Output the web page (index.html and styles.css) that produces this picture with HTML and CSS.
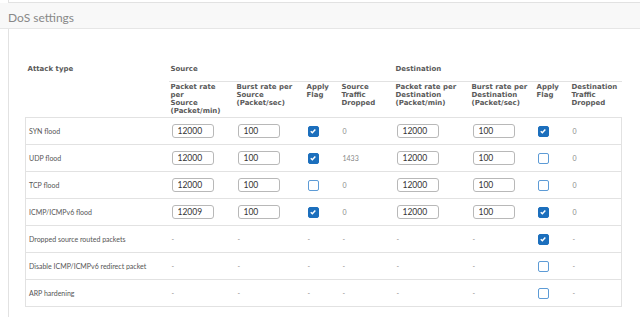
FILE: index.html
```html
<!DOCTYPE html>
<html lang="en">
<head>
    <meta charset="UTF-8">
    <meta name="viewport" content="width=device-width, initial-scale=1.0">
    <title>DoS settings</title>
    <link rel="stylesheet" href="styles.css">
</head>
<body>
    <div class="top-edge"></div>
    <h2 class="section-title">DoS settings</h2>
    <div class="panel">
        <table class="dos-table">
            <colgroup>
                <col style="width:143px">
                <col style="width:66px">
                <col style="width:70px">
                <col style="width:35px">
                <col style="width:54px">
                <col style="width:76px">
                <col style="width:65px">
                <col style="width:35px">
                <col style="width:52px">
            </colgroup>
            <thead>
                <tr class="group-row">
                    <th>Attack type</th>
                    <th colspan="4" class="group">Source</th>
                    <th colspan="4" class="group">Destination</th>
                </tr>
                <tr class="sub-row">
                    <th></th>
                    <th>Packet rate<br>per<br>Source<br>(Packet/min)</th>
                    <th>Burst rate per<br>Source<br>(Packet/sec)</th>
                    <th>Apply<br>Flag</th>
                    <th>Source<br>Traffic<br>Dropped</th>
                    <th>Packet rate per<br>Destination<br>(Packet/min)</th>
                    <th>Burst rate per<br>Destination<br>(Packet/sec)</th>
                    <th>Apply<br>Flag</th>
                    <th>Destination<br>Traffic<br>Dropped</th>
                </tr>
            </thead>
            <tbody>
                <tr>
                    <td class="name">SYN flood</td>
                    <td><input class="field" value="12000"></td>
                    <td><input class="field" value="100"></td>
                    <td><span class="cb checked"><svg viewBox="0 0 10 10"><polyline points="2.2,5.2 4.2,7.2 7.9,3"/></svg></span></td>
                    <td class="val">0</td>
                    <td><input class="field" value="12000"></td>
                    <td><input class="field" value="100"></td>
                    <td><span class="cb checked"><svg viewBox="0 0 10 10"><polyline points="2.2,5.2 4.2,7.2 7.9,3"/></svg></span></td>
                    <td class="val">0</td>
                </tr>
                <tr>
                    <td class="name">UDP flood</td>
                    <td><input class="field" value="12000"></td>
                    <td><input class="field" value="100"></td>
                    <td><span class="cb checked"><svg viewBox="0 0 10 10"><polyline points="2.2,5.2 4.2,7.2 7.9,3"/></svg></span></td>
                    <td class="val">1433</td>
                    <td><input class="field" value="12000"></td>
                    <td><input class="field" value="100"></td>
                    <td><span class="cb"></span></td>
                    <td class="val">0</td>
                </tr>
                <tr>
                    <td class="name">TCP flood</td>
                    <td><input class="field" value="12000"></td>
                    <td><input class="field" value="100"></td>
                    <td><span class="cb"></span></td>
                    <td class="val">0</td>
                    <td><input class="field" value="12000"></td>
                    <td><input class="field" value="100"></td>
                    <td><span class="cb"></span></td>
                    <td class="val">0</td>
                </tr>
                <tr>
                    <td class="name">ICMP/ICMPv6 flood</td>
                    <td><input class="field" value="12009"></td>
                    <td><input class="field" value="100"></td>
                    <td><span class="cb checked"><svg viewBox="0 0 10 10"><polyline points="2.2,5.2 4.2,7.2 7.9,3"/></svg></span></td>
                    <td class="val">0</td>
                    <td><input class="field" value="12000"></td>
                    <td><input class="field" value="100"></td>
                    <td><span class="cb checked"><svg viewBox="0 0 10 10"><polyline points="2.2,5.2 4.2,7.2 7.9,3"/></svg></span></td>
                    <td class="val">0</td>
                </tr>
                <tr>
                    <td class="name">Dropped source routed packets</td>
                    <td class="val">-</td>
                    <td class="val">-</td>
                    <td class="val">-</td>
                    <td class="val">-</td>
                    <td class="val">-</td>
                    <td class="val">-</td>
                    <td><span class="cb checked"><svg viewBox="0 0 10 10"><polyline points="2.2,5.2 4.2,7.2 7.9,3"/></svg></span></td>
                    <td class="val">-</td>
                </tr>
                <tr>
                    <td class="name">Disable ICMP/ICMPv6 redirect packet</td>
                    <td class="val">-</td>
                    <td class="val">-</td>
                    <td class="val">-</td>
                    <td class="val">-</td>
                    <td class="val">-</td>
                    <td class="val">-</td>
                    <td><span class="cb"></span></td>
                    <td class="val">-</td>
                </tr>
                <tr>
                    <td class="name">ARP hardening</td>
                    <td class="val">-</td>
                    <td class="val">-</td>
                    <td class="val">-</td>
                    <td class="val">-</td>
                    <td class="val">-</td>
                    <td class="val">-</td>
                    <td><span class="cb"></span></td>
                    <td class="val">-</td>
                </tr>
            </tbody>
        </table>
    </div>
</body>
</html>
```

FILE: styles.css
```css
* {
    margin: 0;
    padding: 0;
    box-sizing: border-box;
}
body {
    font-family: 'Lato', 'Open Sans', sans-serif;
    background: #fff;
    color: #555;
    overflow: hidden;
}
.top-edge {
    margin-left: 8px;
    height: 3px;
    border-left: 1px solid #e2e2e2;
    border-bottom: 1px solid #e2e2e2;
}
.section-title {
    height: 26px;
    line-height: 25px;
    padding: 2px 0 0 8px;
    background: #f8f8f8;
    border-bottom: 1px solid #e6e6e6;
    font-size: 12px;
    font-weight: normal;
    color: #888;
}
.panel {
    margin-left: 8px;
    border-left: 1px solid #e2e2e2;
    padding: 34px 0 20px 16px;
}
.dos-table {
    width: 596px;
    table-layout: fixed;
    border-collapse: collapse;
}
.dos-table th {
    text-align: left;
    font-family: 'DejaVu Sans', sans-serif;
    font-size: 7px;
    font-weight: bold;
    color: #5a5a5a;
    vertical-align: top;
    padding-left: 2px;
    white-space: nowrap;
}
.group-row th {
    line-height: 12px;
    padding-bottom: 6px;
}
.group-row th.group {
    border-bottom: 1px solid #e2e2e2;
}
.sub-row th {
    line-height: 8px;
    padding-top: 1px;
    padding-bottom: 2px;
}
.dos-table tbody {
    border: 1px solid #e2e2e2;
}
.dos-table tbody tr {
    border-top: 1px solid #e2e2e2;
}
.dos-table td {
    height: 27px;
    padding-left: 3px;
    vertical-align: middle;
}
.name {
    font-size: 7px;
    color: #555;
}
.val {
    font-size: 7px;
    color: #888;
}
.field {
    display: block;
    width: 42px;
    height: 14px;
    border: 1px solid #b8b8b8;
    border-radius: 3px;
    padding-left: 5px;
    font-family: 'Lato', sans-serif;
    font-size: 8.5px;
    color: #333;
    background: #fff;
}
.cb {
    display: block;
    width: 11px;
    height: 11px;
    border: 1.5px solid #5d9bd6;
    border-radius: 2px;
    background: #fff;
}
.cb.checked {
    border-color: #1c6fbd;
    background: #1c6fbd;
}
.cb svg {
    display: block;
    width: 8px;
    height: 8px;
    fill: none;
    stroke: #fff;
    stroke-width: 1.8;
}
```
